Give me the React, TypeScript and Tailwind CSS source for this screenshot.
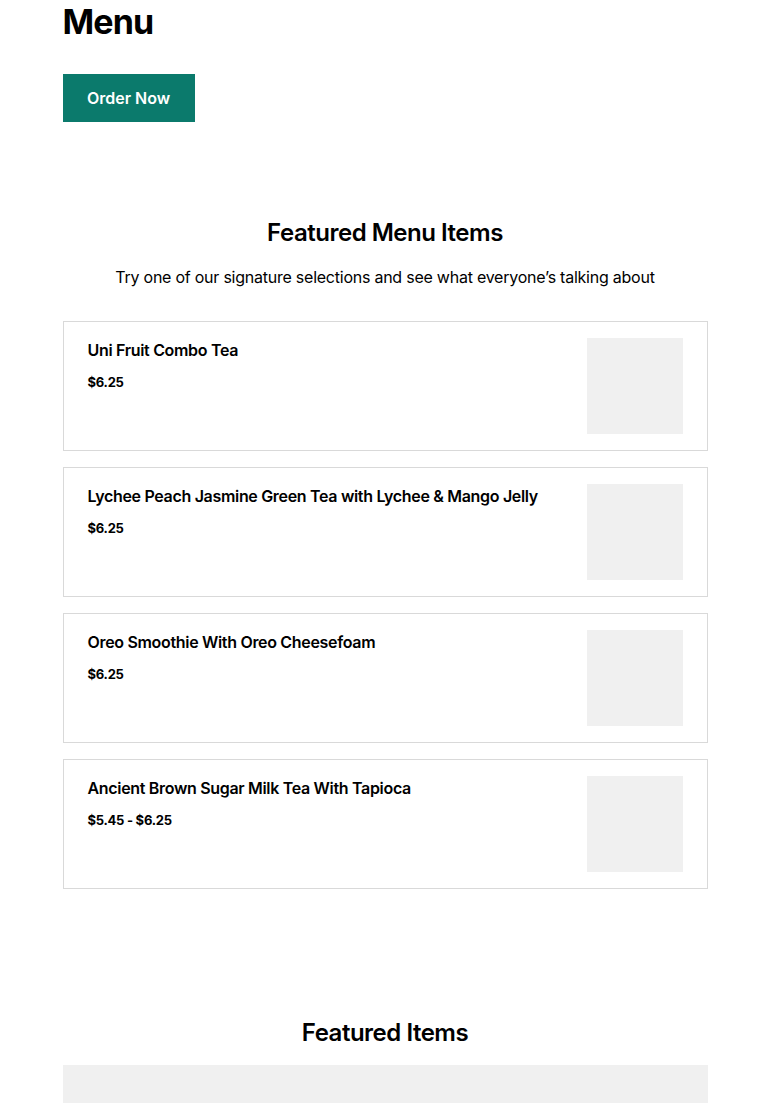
const items = [
  { name: 'Uni Fruit Combo Tea', price: '$6.25' },
  { name: 'Lychee Peach Jasmine Green Tea with Lychee & Mango Jelly', price: '$6.25' },
  { name: 'Oreo Smoothie With Oreo Cheesefoam', price: '$6.25' },
  { name: 'Ancient Brown Sugar Milk Tea With Tapioca', price: '$5.45 - $6.25' },
]

function ItemCard({ name, price }: { name: string; price: string }) {
  return (
    <div className="flex justify-between gap-6 border border-[#d9d9d9] bg-white px-6 py-4">
      <div className="flex-1">
        <h3 className="text-base leading-6 font-semibold tracking-[-0.02em] text-black">{name}</h3>
        <p className="mt-[10px] text-[13px] leading-5 font-bold tracking-[-0.02em] text-black">{price}</p>
      </div>
      <div className="w-24 h-24 shrink-0 bg-[#f0f0f0]" />
    </div>
  )
}

export default function App() {
  return (
    <div className="min-h-screen bg-white text-black font-['Inter','Liberation_Sans',sans-serif]">
      <div className="mx-auto w-[645px]">
        {/* header */}
        <h1 className="pt-[2px] text-[34px] leading-10 font-bold tracking-tight">Menu</h1>
        <button className="mt-[32px] h-12 w-[132px] bg-[#0b7a6c] text-white text-base font-semibold">
          Order Now
        </button>

        {/* featured menu items */}
        <section className="mt-[95px]">
          <h2 className="text-center text-2xl leading-8 font-semibold tracking-[-0.02em]">Featured Menu Items</h2>
          <p className="mt-4 text-center text-base leading-6 tracking-[-0.015em]">
            Try one of our signature selections and see what everyone’s talking about
          </p>
          <div className="mt-8 flex flex-col gap-4">
            {items.map(i => (
              <ItemCard key={i.name} name={i.name} price={i.price} />
            ))}
          </div>
        </section>

        {/* featured items */}
        <section className="mt-32">
          <h2 className="text-center text-2xl leading-8 font-semibold tracking-[-0.02em]">Featured Items</h2>
          <div className="mt-4 h-[200px] bg-[#f0f0f0]" />
        </section>
      </div>
    </div>
  )
}
